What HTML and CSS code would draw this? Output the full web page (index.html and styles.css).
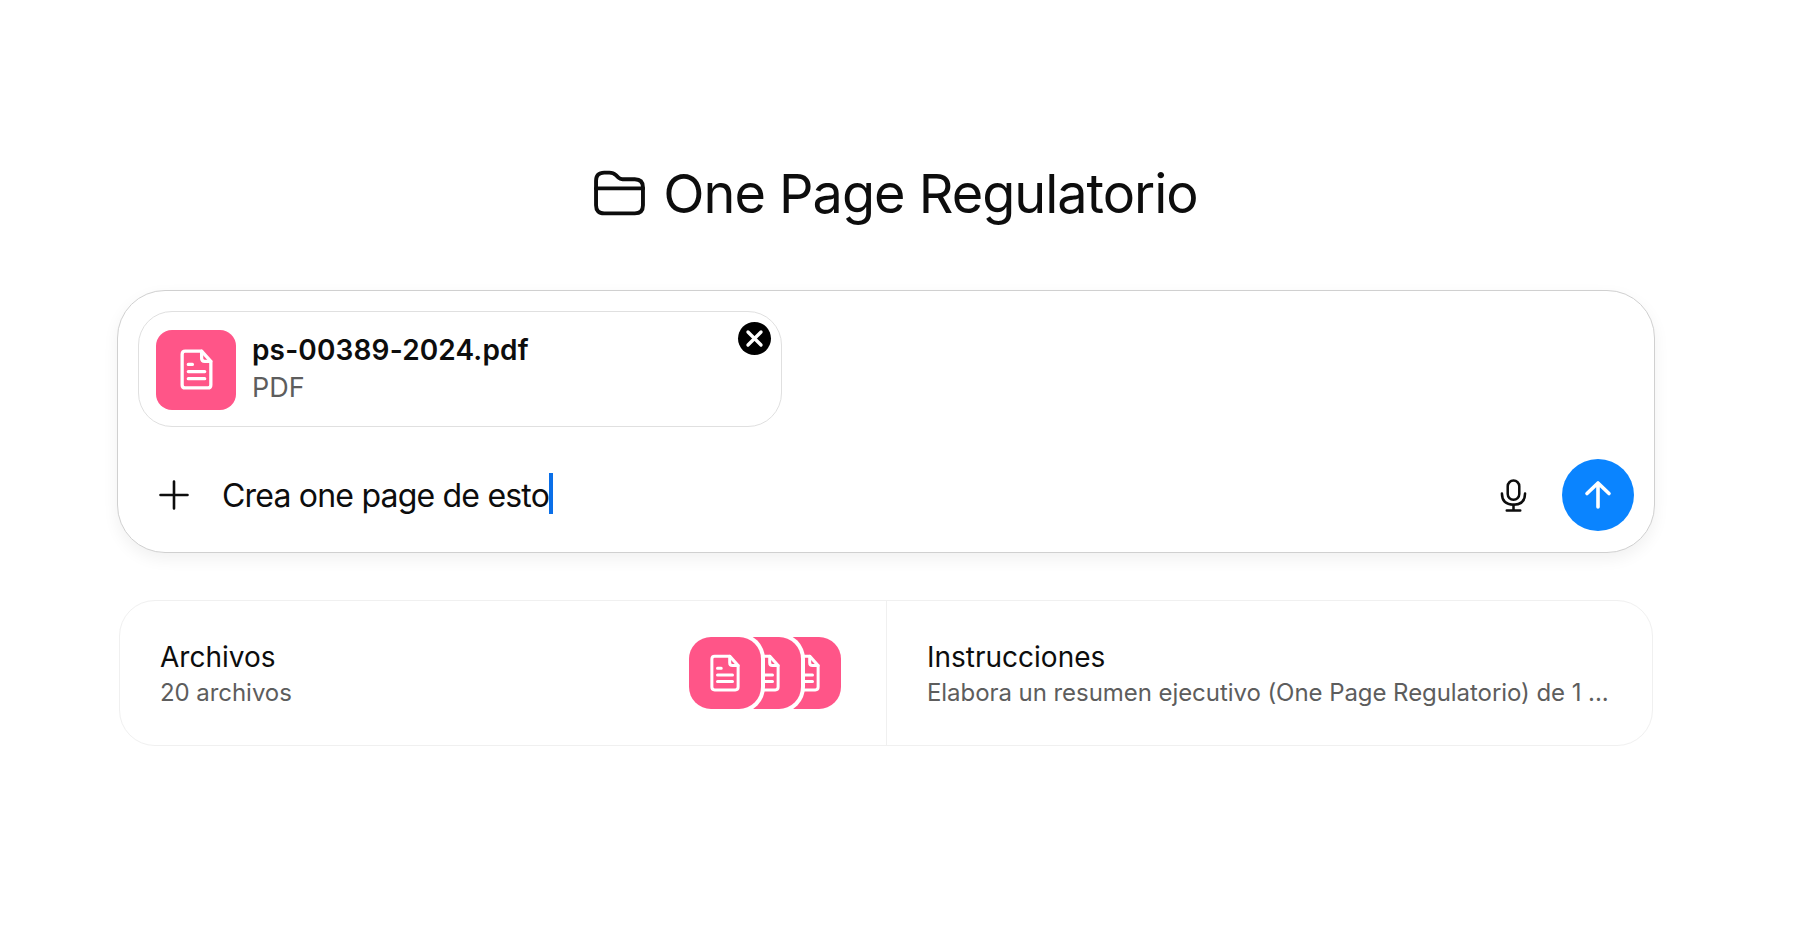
FILE: index.html
```html
<!DOCTYPE html>
<html lang="es">
<head>
    <meta charset="UTF-8">
    <meta name="viewport" content="width=device-width, initial-scale=1.0">
    <title>One Page Regulatorio</title>
    <link rel="stylesheet" href="styles.css">
</head>
<body>

    <main class="page">
        <h1 class="title">
            <svg class="folder-icon" viewBox="0 0 50 44" fill="none" stroke="#0d0d0d" stroke-width="3.8" stroke-linejoin="round" stroke-linecap="round">
                <path d="M2 10 Q2 2 10 2 H15 Q19 2 21.5 4.5 L24 7 Q25.5 8.5 28 8.5 H40 Q48 8.5 48 16.5 V34 Q48 42 40 42 H10 Q2 42 2 34 Z"/>
                <path d="M2 17.5 H48"/>
            </svg>
            One Page Regulatorio
        </h1>

        <section class="composer">
            <div class="chip">
                <div class="file-tile">
                    <svg class="doc-icon" viewBox="0 0 32 40" fill="none" stroke="#fff" stroke-width="3.2" stroke-linejoin="round" stroke-linecap="round">
                        <path d="M5 2 H21 L30 12 V35 Q30 38 27 38 H5 Q2 38 2 35 V5 Q2 2 5 2 Z"/>
                        <path d="M21 2 V9 Q21 12 24 12 H30"/>
                        <path d="M8 15 H12 M8 22 H24 M8 29 H24"/>
                    </svg>
                </div>
                <div class="chip-text">
                    <div class="chip-name">ps-00389-2024.pdf</div>
                    <div class="chip-type">PDF</div>
                </div>
                <button class="chip-close" aria-label="Quitar">
                    <svg viewBox="0 0 16 16" fill="none" stroke="#fff" stroke-width="2.8" stroke-linecap="round">
                        <path d="M2.5 2.5 L13.5 13.5 M13.5 2.5 L2.5 13.5"/>
                    </svg>
                </button>
            </div>

            <div class="input-row">
                <svg class="plus-icon" viewBox="0 0 30 30" fill="none" stroke="#0d0d0d" stroke-width="2.6" stroke-linecap="round">
                    <path d="M15 1.5 V28.5 M1.5 15 H28.5"/>
                </svg>
                <div class="prompt">Crea one page de esto<span class="caret"></span></div>
                <svg class="mic-icon" viewBox="0 0 28 34" fill="none" stroke="#0d0d0d" stroke-width="2.6" stroke-linecap="round" stroke-linejoin="round">
                    <rect x="8" y="1.5" width="12" height="20" rx="6"/>
                    <path d="M2 15 Q2 26.5 14 26.5 Q26 26.5 26 15"/>
                    <path d="M14 26.5 V32 M7 32.5 H21"/>
                </svg>
                <button class="send-btn" aria-label="Enviar">
                    <svg viewBox="0 0 28 30" fill="none" stroke="#fff" stroke-width="3.6" stroke-linecap="round" stroke-linejoin="round">
                        <path d="M14 27 V3 M3 13.5 L14 3 L25 13.5"/>
                    </svg>
                </button>
            </div>
        </section>

        <section class="cards">
            <div class="card">
                <div class="card-text">
                    <div class="card-title">Archivos</div>
                    <div class="card-sub">20 archivos</div>
                </div>
                <div class="stack">
                    <div class="stack-tile">
                        <svg class="doc-icon" viewBox="0 0 32 40" fill="none" stroke="#fff" stroke-width="3.2" stroke-linejoin="round" stroke-linecap="round">
                            <path d="M5 2 H21 L30 12 V35 Q30 38 27 38 H5 Q2 38 2 35 V5 Q2 2 5 2 Z"/>
                            <path d="M21 2 V9 Q21 12 24 12 H30"/>
                            <path d="M8 15 H12 M8 22 H24 M8 29 H24"/>
                        </svg>
                    </div>
                    <div class="stack-tile">
                        <svg class="doc-icon" viewBox="0 0 32 40" fill="none" stroke="#fff" stroke-width="3.2" stroke-linejoin="round" stroke-linecap="round">
                            <path d="M5 2 H21 L30 12 V35 Q30 38 27 38 H5 Q2 38 2 35 V5 Q2 2 5 2 Z"/>
                            <path d="M21 2 V9 Q21 12 24 12 H30"/>
                            <path d="M8 15 H12 M8 22 H24 M8 29 H24"/>
                        </svg>
                    </div>
                    <div class="stack-tile">
                        <svg class="doc-icon" viewBox="0 0 32 40" fill="none" stroke="#fff" stroke-width="3.2" stroke-linejoin="round" stroke-linecap="round">
                            <path d="M5 2 H21 L30 12 V35 Q30 38 27 38 H5 Q2 38 2 35 V5 Q2 2 5 2 Z"/>
                            <path d="M21 2 V9 Q21 12 24 12 H30"/>
                            <path d="M8 15 H12 M8 22 H24 M8 29 H24"/>
                        </svg>
                    </div>
                </div>
            </div>
            <div class="card card-right">
                <div class="card-text">
                    <div class="card-title">Instrucciones</div>
                    <div class="card-sub card-clip">Elabora un resumen ejecutivo (One Page Regulatorio) de 1 ...</div>
                </div>
            </div>
        </section>
    </main>

</body>
</html>
```

FILE: styles.css
```css
body {
    font-family: Inter, "Liberation Sans", sans-serif;
    background-color: #fff;
    color: #0d0d0d;
    margin: 0;
}

.page {
    width: 1538px;
    margin-left: 117px;
    padding-top: 160px;
}

.title {
    display: flex;
    align-items: center;
    justify-content: center;
    gap: 18px;
    height: 66px;
    margin: 0 0 64px 20px;
    font-size: 54px;
    font-weight: 400;
    letter-spacing: -1px;
}

.folder-icon {
    width: 51px;
    height: 46px;
}

.composer {
    height: 263px;
    box-sizing: border-box;
    background-color: #fff;
    border: 1.5px solid #d0d0d0;
    border-radius: 48px;
    box-shadow: 0 6px 16px rgba(0, 0, 0, 0.06);
    padding: 20px;
    margin-bottom: 47px;
}

.chip {
    position: relative;
    display: flex;
    align-items: center;
    gap: 16px;
    width: 644px;
    height: 116px;
    box-sizing: border-box;
    border: 1.5px solid #e0e0e0;
    border-radius: 34px;
    padding: 1px 17px 0;
}

.file-tile {
    display: flex;
    align-items: center;
    justify-content: center;
    width: 80px;
    height: 80px;
    border-radius: 16px;
    background-color: #ff5588;
}

.doc-icon {
    width: 30px;
    height: 38px;
}

.file-tile .doc-icon {
    width: 33px;
    height: 41px;
}

.chip-text {
    padding-bottom: 2px;
}

.chip-name {
    font-size: 28px;
    font-weight: 600;
    line-height: 38px;
    letter-spacing: 0.15px;
}

.chip-type {
    font-size: 27px;
    line-height: 38px;
    color: #5d5d5d;
}

.chip-close {
    position: absolute;
    top: 10px;
    right: 10px;
    display: flex;
    align-items: center;
    justify-content: center;
    width: 33px;
    height: 33px;
    padding: 0;
    border: none;
    border-radius: 50%;
    background-color: #000;
}

.chip-close svg {
    width: 19px;
    height: 19px;
}

.input-row {
    display: flex;
    align-items: center;
    margin-top: 32px;
    padding: 0 0 0 21px;
    height: 72px;
}

.plus-icon {
    width: 30px;
    height: 30px;
    margin-right: 33px;
}

.prompt {
    flex: 1;
    display: flex;
    align-items: center;
    font-size: 32px;
    letter-spacing: -0.8px;
}

.caret {
    width: 4px;
    height: 41px;
    margin-bottom: 3px;
    background-color: #0a6fe8;
}

.mic-icon {
    width: 27px;
    height: 33px;
    margin-right: 35px;
}

.send-btn {
    display: flex;
    align-items: center;
    justify-content: center;
    width: 72px;
    height: 72px;
    padding: 0;
    border: none;
    border-radius: 50%;
    background-color: #0a84ff;
}

.send-btn svg {
    width: 28px;
    height: 30px;
}

.cards {
    display: flex;
    height: 146px;
    box-sizing: border-box;
    margin: 0 2px;
    border: 1.5px solid #f0f0f0;
    border-radius: 36px;
}

.card {
    flex: 0 0 50%;
    box-sizing: border-box;
    display: flex;
    align-items: center;
    justify-content: space-between;
    padding: 0 45px 0 40px;
}

.card-right {
    border-left: 1.5px solid #f0f0f0;
    padding: 0 39px 0 40px;
}

.card-text {
    padding-top: 3px;
}

.card-title {
    font-size: 28px;
    line-height: 36px;
}

.card-sub {
    font-size: 24px;
    line-height: 35px;
    letter-spacing: -0.06px;
    color: #5d5d5d;
}

.card-clip {
    white-space: nowrap;
}

.stack {
    display: flex;
    flex-direction: row-reverse;
}

.stack-tile {
    position: relative;
    display: flex;
    align-items: center;
    justify-content: center;
    width: 72px;
    height: 72px;
    border-radius: 22px;
    background-color: #ff5588;
    margin-left: -32px;
    box-shadow: 0 0 0 4px #fff;
}
```
